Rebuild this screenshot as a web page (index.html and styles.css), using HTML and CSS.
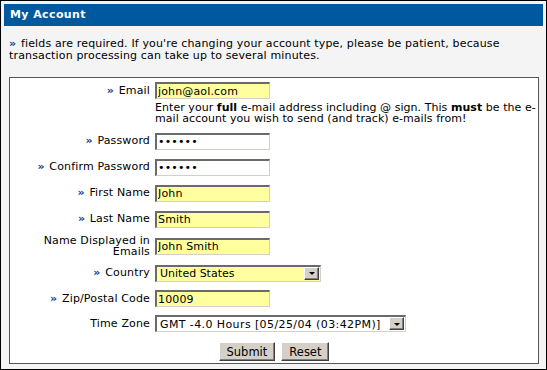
FILE: index.html
```html
<!DOCTYPE html>
<html lang="en">

<head>
    <meta charset="UTF-8">
    <meta name="viewport" content="width=device-width, initial-scale=1.0">
    <title>My Account</title>
    <link rel="stylesheet" href="styles.css">
</head>

<body>
    <main class="page">
        <h1 class="titleBar">My Account</h1>
        <p class="intro"><span class="req">&raquo;</span> fields are required. If you're changing your account type,
            please be patient, because transaction processing can take up to several minutes.</p>
        <form class="accountForm">
            <div class="row rowEmail">
                <label class="fieldLabel" for="email"><span class="req">&raquo;</span> Email</label>
                <div class="fieldCell">
                    <input class="field fieldYellow" type="text" id="email" name="email" value="john@aol.com" />
                    <p class="hint">Enter your <b>full</b> e-mail address including @ sign. This <b>must</b> be the
                        e-mail account you wish to send (and track) e-mails from!</p>
                </div>
            </div>
            <div class="row">
                <label class="fieldLabel" for="password"><span class="req">&raquo;</span> Password</label>
                <input class="field" type="password" id="password" name="password" value="secret" />
            </div>
            <div class="row">
                <label class="fieldLabel" for="confirm"><span class="req">&raquo;</span> Confirm Password</label>
                <input class="field" type="password" id="confirm" name="confirm" value="secret" />
            </div>
            <div class="row">
                <label class="fieldLabel" for="firstName"><span class="req">&raquo;</span> First Name</label>
                <input class="field fieldYellow" type="text" id="firstName" name="firstName" value="John" />
            </div>
            <div class="row">
                <label class="fieldLabel" for="lastName"><span class="req">&raquo;</span> Last Name</label>
                <input class="field fieldYellow" type="text" id="lastName" name="lastName" value="Smith" />
            </div>
            <div class="row rowName">
                <label class="fieldLabel twoLines" for="displayName">Name Displayed in<br>Emails</label>
                <input class="field fieldYellow" type="text" id="displayName" name="displayName" value="John Smith" />
            </div>
            <div class="row">
                <label class="fieldLabel" for="country"><span class="req">&raquo;</span> Country</label>
                <div class="combo comboCountry fieldYellow">
                    <select id="country" name="country">
                        <option>United States</option>
                        <option>Canada</option>
                    </select>
                    <span class="dropButton"></span>
                </div>
            </div>
            <div class="row rowShort">
                <label class="fieldLabel" for="zip"><span class="req">&raquo;</span> Zip/Postal Code</label>
                <input class="field fieldYellow" type="text" id="zip" name="zip" value="10009" />
            </div>
            <div class="row rowShort">
                <label class="fieldLabel" for="timeZone">Time Zone</label>
                <div class="combo comboZone">
                    <select id="timeZone" name="timeZone">
                        <option>GMT -4.0 Hours [05/25/04 (03:42PM)]</option>
                    </select>
                    <span class="dropButton"></span>
                </div>
            </div>
            <div class="buttonRow">
                <input class="button" type="submit" value="Submit" />
                <input class="button" type="reset" value="Reset" />
            </div>
        </form>
    </main>
</body>

</html>
```

FILE: styles.css
```css
* {
    font-family: "DejaVu Sans", Verdana, sans-serif;
}

body {
    margin: 0;
}

h1,
p {
    margin: 0;
    padding: 0;
}

.page {
    box-sizing: border-box;
    width: 547px;
    height: 370px;
    border: 1px solid #000;
    padding: 3px;
    background-color: #f4f4f4;
    overflow: hidden;
}

.titleBar {
    height: 22px;
    line-height: 22px;
    padding-left: 6px;
    background-color: #00589e;
    color: #fff;
    font-size: 11px;
    font-weight: bold;
    letter-spacing: 0.4px;
}

.intro {
    margin: 12px 0 0 5px;
    font-size: 11px;
    line-height: 12px;
    letter-spacing: 0.15px;
    color: #000;
}

.req {
    color: #0f3a8c;
    font-size: 11px;
    font-weight: bold;
    margin-right: 1px;
}

.accountForm {
    margin: 15px 4px 0 5px;
    padding: 4px 0 2px 0;
    border: 1px solid #555;
    background-color: #fff;
}

.row {
    display: grid;
    grid-template-columns: 140px 1fr;
    column-gap: 5px;
    align-items: center;
    height: 26px;
}

.rowEmail {
    align-items: start;
    height: 46px;
}

.rowEmail .fieldLabel {
    padding-top: 3px;
}

.rowName {
    height: 28px;
}

.rowShort {
    height: 25px;
}

.fieldLabel {
    text-align: right;
    font-size: 11px;
    line-height: 12px;
    letter-spacing: 0.15px;
    color: #000;
}

.twoLines {
    line-height: 11px;
}

.fieldCell {
    display: flex;
    flex-direction: column;
    align-items: flex-start;
}

.hint {
    margin-top: 3px;
    font-size: 11px;
    line-height: 11px;
    letter-spacing: 0.05px;
    color: #000;
}

.field {
    box-sizing: border-box;
    width: 115px;
    height: 17px;
    margin: 0;
    padding: 0 1px;
    border-style: solid;
    border-width: 2px 1px 1px 2px;
    border-color: #6a6a6a #d4d0c8 #d4d0c8 #6a6a6a;
    background-color: #fff;
    font-size: 11px;
    letter-spacing: 0.15px;
    color: #000;
    outline: none;
}

.fieldYellow {
    background-color: #ffffa0;
}

.combo {
    box-sizing: border-box;
    display: flex;
    align-items: stretch;
    height: 17px;
    border-style: solid;
    border-width: 2px 1px 1px 2px;
    border-color: #6a6a6a #d4d0c8 #d4d0c8 #6a6a6a;
}

.comboCountry {
    width: 166px;
}

.comboZone {
    width: 251px;
    background-color: #fff;
}

.combo select {
    flex: 1;
    min-width: 0;
    appearance: none;
    border: none;
    margin: 0;
    padding: 0 0 0 3px;
    background: transparent;
    font-size: 11px;
    color: #000;
    outline: none;
}

.comboZone select {
    letter-spacing: 0.4px;
}

.dropButton {
    box-sizing: border-box;
    display: flex;
    justify-content: center;
    align-items: center;
    width: 15px;
    height: 13px;
    margin-right: 1px;
    background-color: #d4d0c8;
    border-style: solid;
    border-width: 1px;
    border-color: #fff #404040 #404040 #fff;
    box-shadow: inset -1px -1px 0 #808080;
}

.dropButton::after {
    content: "";
    border-left: 3px solid transparent;
    border-right: 3px solid transparent;
    border-top: 3px solid #000;
    margin-top: 1px;
}

.buttonRow {
    display: flex;
    justify-content: center;
    gap: 6px;
    padding-top: 6px;
}

.button {
    box-sizing: border-box;
    height: 19px;
    margin: 0;
    padding: 0 7px;
    background-color: #d4d0c8;
    border-style: solid;
    border-width: 1px;
    border-color: #fff #404040 #404040 #fff;
    box-shadow: inset -1px -1px 0 #808080;
    font-size: 11.5px;
    color: #000;
}
```
